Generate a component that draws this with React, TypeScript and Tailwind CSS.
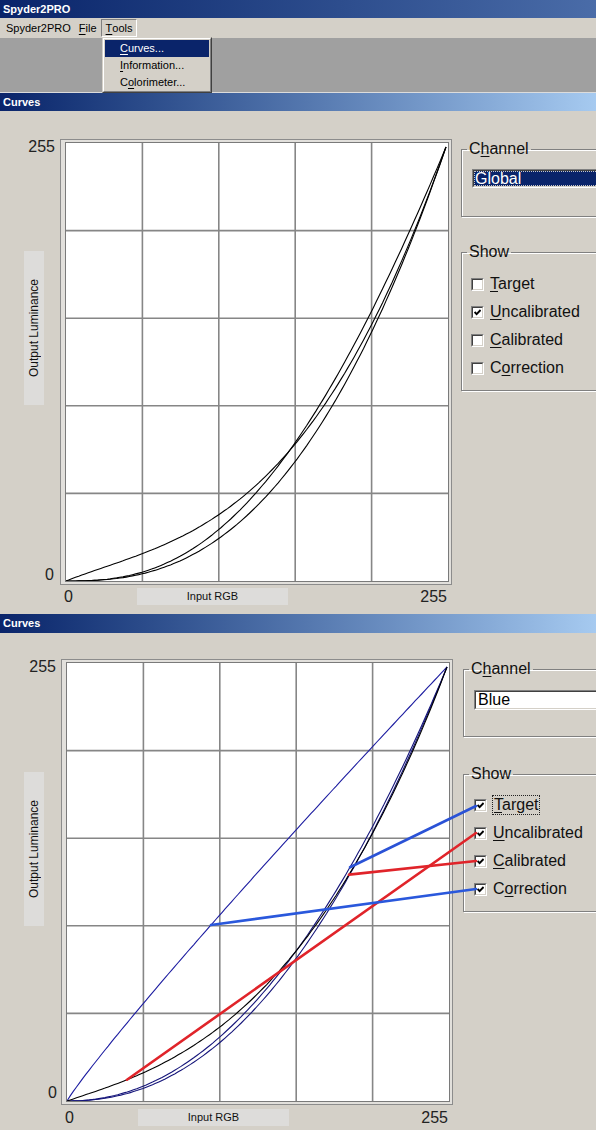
import React from "react";

// plot area inside the sunken frame
const W = 382;
const H = 438;

type Fn = (x: number) => number;

// sample a transfer curve into an svg path (y grows upward from the plot bottom)
const curvePath = (f: Fn, steps = 120) => {
  const pts: string[] = [];
  for (let i = 0; i <= steps; i++) {
    const x = i / steps;
    const y = Math.min(1, Math.max(0, f(x)));
    pts.push(`${(x * (W - 2)).toFixed(1)},${(H - y * (H - 4)).toFixed(1)}`);
  }
  return "M" + pts.join(" L");
};

// global channel
const gBump: Fn = (x) => x ** 2.5 + 0.35 * x * (1 - x) ** 2;
const gLow: Fn = (x) => x ** 2.55;
const gMid: Fn = (x) => x ** (2.5 - 0.4 * x);

// blue channel
const bTarget: Fn = (x) => x ** 0.93;
const bUncal: Fn = (x) => x ** 2.35 + 0.3 * x * (1 - x) ** 1.6;
const bCal: Fn = (x) => x ** 2.1;
const bCorr: Fn = (x) => x ** 2.2;

const Key = ({ text, at }: { text: string; at: number }) => (
  <>
    {text.slice(0, at)}
    <span className="underline underline-offset-2">{text[at]}</span>
    {text.slice(at + 1)}
  </>
);

const TitleBar = ({ children, className = "" }: { children: React.ReactNode; className?: string }) => (
  <div
    className={`bg-linear-to-r from-[#0a246a] to-[#a6caf0] text-white font-bold text-[11px] pl-[3px] flex items-center ${className}`}
  >
    {children}
  </div>
);

const Check = ({ on }: { on: boolean }) => (
  <div className="shrink-0 w-[13px] h-[13px] border border-t-[#808080] border-l-[#808080] border-b-white border-r-white">
    <div className="w-full h-full flex items-center justify-center bg-white border border-t-[#404040] border-l-[#404040] border-b-[#d4d0c8] border-r-[#d4d0c8]">
      {on && (
        <svg width="7" height="7" viewBox="0 0 7 7">
          <path d="M0.6 3 L2.6 5.2 L6.6 1" stroke="#000" strokeWidth="1.9" fill="none" />
        </svg>
      )}
    </div>
  </div>
);

const GridLines = () => (
  <g stroke="#868686" strokeWidth="1.6">
    {[1, 2, 3, 4].map((i) => (
      <line key={"v" + i} x1={(i * W) / 5} y1={0} x2={(i * W) / 5} y2={H} />
    ))}
    {[1, 2, 3, 4].map((i) => (
      <line key={"h" + i} x1={0} y1={(i * H) / 5} x2={W} y2={(i * H) / 5} />
    ))}
  </g>
);

const Plot = ({ children }: { children: React.ReactNode }) => (
  <div className="w-[392px] h-[446px] border border-[#8c8c8c] bg-[#e2e0dc] pl-[4px] pt-[2px] pr-[2px] pb-[2px]">
    <div className="border border-[#7a7a7a] bg-white">
      <svg width={W} height={H} className="block">
        <GridLines />
        {children}
      </svg>
    </div>
  </div>
);

type Item = { label: string; at: number; on: boolean; focus?: boolean };

type PanelProps = {
  variant: "global" | "blue";
  items: Item[];
  children: React.ReactNode;
  overlay?: React.ReactNode;
};

const CurvesPanel = ({ variant, items, children, overlay }: PanelProps) => {
  const g = variant === "global";
  return (
    <div className={`relative overflow-hidden flex ${g ? "h-[503px] pt-[28px]" : "h-[497px] pt-[26px]"}`}>
      {/* y axis labels */}
      <div className={`shrink-0 h-[446px] flex flex-col ${g ? "w-[60px]" : "w-[61px]"}`}>
        <div className="text-right pr-[5px] text-[16px] leading-[16px] text-[#222]">255</div>
        <div
          className={`ml-[24px] w-[20px] h-[154px] bg-[#dddcda] flex items-center justify-center ${g ? "mt-[96px]" : "mt-[97px]"}`}
        >
          <span className="[writing-mode:vertical-rl] rotate-180 text-[12px] text-[#111]">Output Luminance</span>
        </div>
        <div className="flex-1" />
        <div className={`text-right text-[16px] leading-[16px] text-[#222] ${g ? "pr-[6px] pb-[2px]" : "pr-[4px] pb-[4px]"}`}>0</div>
      </div>

      {/* plot + x axis labels */}
      <div className="shrink-0 w-[392px]">
        <Plot>{children}</Plot>
        <div className={`flex h-[17px] items-center ${g ? "mt-[3px]" : "mt-[4px]"}`}>
          <div className="w-[77px] pl-[4px] text-[16px] leading-[16px] text-[#222]">0</div>
          <div className="w-[151px] h-[17px] bg-[#dddcda] flex items-center justify-center text-[11px] text-[#111]">
            Input RGB
          </div>
          <div className="flex-1 text-right pr-[5px] text-[16px] leading-[16px] text-[#222]">255</div>
        </div>
      </div>

      {/* channel + show groups */}
      <div className={`shrink-0 w-[150px] mt-[1px] ${g ? "ml-[9px]" : "ml-[10px]"}`}>
        <fieldset
          className={`border border-[#808080] shadow-[inset_1px_1px_0_#fff,1px_1px_0_#fff] px-0 pt-0 ${g ? "pb-[28px]" : "pb-[26px]"}`}
        >
          <legend className="ml-[5px] px-[2px] text-[16px] leading-[18px] text-[#111]">
            <Key text="Channel" at={1} />
          </legend>
          <div
            className={`ml-[10px] w-[140px] border border-t-[#808080] border-l-[#808080] border-b-white border-r-white ${g ? "mt-[11px] h-[19px]" : "mt-[12px] h-[20px]"}`}
          >
            <div className="h-full bg-white border border-t-[#404040] border-l-[#404040] border-b-[#d4d0c8] border-r-[#d4d0c8]">
              {g ? (
                <div className="h-full bg-[#0a246a] text-white text-[16px] leading-[15px] outline-1 outline-dotted outline-[#c8c8c8] -outline-offset-1 pl-[1px]">
                  Global
                </div>
              ) : (
                <div className="h-full text-[16px] leading-[16px] pl-[2px] text-black">Blue</div>
              )}
            </div>
          </div>
        </fieldset>

        <fieldset
          className={`border border-[#808080] shadow-[inset_1px_1px_0_#fff,1px_1px_0_#fff] px-0 pt-0 pb-[8px] ${g ? "mt-[26px]" : "mt-[28px]"}`}
        >
          <legend className="ml-[5px] px-[2px] text-[16px] leading-[18px] text-[#111]">Show</legend>
          <div className={g ? "mt-[9px]" : "mt-[8px]"}>
            {items.map((it) => (
              <div key={it.label} className={`h-[28px] flex items-center ${g ? "pl-[9px]" : "pl-[10px]"}`}>
                <Check on={it.on} />
                <span
                  className={`text-[16px] leading-[18px] text-[#111] ${it.focus ? "ml-[5px] px-[1px] border border-dotted border-[#222]" : "ml-[6px]"}`}
                >
                  <Key text={it.label} at={it.at} />
                </span>
              </div>
            ))}
          </div>
        </fieldset>
      </div>

      {overlay}
    </div>
  );
};

// blue panel: plot origin in panel coordinates
const OX = 67;
const OY = 468;
const at = (f: Fn, px: number): [number, number] => {
  const nx = (px - OX) / (W - 2);
  return [px, OY - f(nx) * (H - 4)];
};

const callouts: { from: [number, number]; to: [number, number]; color: string }[] = [
  { from: [476, 173], to: at(bCal, 350), color: "#2a52d6" },
  { from: [476, 200], to: at(bUncal, 127), color: "#e0242a" },
  { from: [476, 228], to: at(bUncal, 349), color: "#e0242a" },
  { from: [476, 256], to: at(bTarget, 211), color: "#2a58dc" },
];

const Callouts = () => (
  <svg className="absolute left-0 top-0 pointer-events-none" width={596} height={497}>
    {callouts.map((c, i) => (
      <line
        key={i}
        x1={c.from[0]}
        y1={c.from[1]}
        x2={c.to[0]}
        y2={c.to[1]}
        stroke={c.color}
        strokeWidth="2.6"
        strokeLinecap="round"
      />
    ))}
  </svg>
);

export default function App() {
  return (
    <div className="w-[596px] h-[1130px] overflow-hidden bg-[#d4d0c8] font-['Liberation_Sans',Arial,sans-serif] select-none">
      {/* app window title */}
      <div className="h-[18px] bg-linear-to-r from-[#0a246a] to-[#4a6ca8] text-white font-bold text-[11px] pl-[3px] flex items-center">
        Spyder2PRO
      </div>

      {/* menu bar */}
      <div className="relative z-10 h-[20px] flex items-center text-[11px] text-black">
        <span className="ml-[6px]">Spyder2PRO</span>
        <span className="ml-[8px]">
          <Key text="File" at={0} />
        </span>
        <span className="ml-[4px] h-[18px] px-[4px] flex items-center border border-t-[#808080] border-l-[#808080] border-b-white border-r-white">
          <Key text="Tools" at={0} />
        </span>

        <div className="absolute left-[102px] top-[19px] w-[110px] h-[56px] border border-t-[#d4d0c8] border-l-[#d4d0c8] border-b-[#404040] border-r-[#404040] bg-[#d4d0c8]">
          <div className="h-full border border-t-white border-l-white border-b-[#808080] border-r-[#808080] p-[1px]">
            <div className="h-[17px] bg-[#0a246a] text-white pl-[15px] flex items-center">
              <Key text="Curves..." at={0} />
            </div>
            <div className="h-[17px] pl-[15px] flex items-center">
              <Key text="Information..." at={0} />
            </div>
            <div className="h-[17px] pl-[15px] flex items-center">
              <Key text="Colorimeter..." at={1} />
            </div>
          </div>
        </div>
      </div>

      {/* MDI workspace */}
      <div className="h-[55px] bg-[#a0a0a0] border-b border-[#dcdcdc]" />

      <TitleBar className="h-[18px]">Curves</TitleBar>
      <CurvesPanel
        variant="global"
        items={[
          { label: "Target", at: 0, on: false },
          { label: "Uncalibrated", at: 0, on: true },
          { label: "Calibrated", at: 0, on: false },
          { label: "Correction", at: 1, on: false },
        ]}
      >
        <g fill="none" stroke="#000" strokeWidth="1.1">
          <path d={curvePath(gBump)} />
          <path d={curvePath(gLow)} />
          <path d={curvePath(gMid)} />
        </g>
      </CurvesPanel>

      <TitleBar className="h-[19px]">Curves</TitleBar>
      <CurvesPanel
        variant="blue"
        items={[
          { label: "Target", at: 0, on: true, focus: true },
          { label: "Uncalibrated", at: 0, on: true },
          { label: "Calibrated", at: 0, on: true },
          { label: "Correction", at: 1, on: true },
        ]}
        overlay={<Callouts />}
      >
        <g fill="none" strokeWidth="1.1">
          <path d={curvePath(bTarget)} stroke="#1c1ca0" />
          <path d={curvePath(bCal)} stroke="#15157a" />
          <path d={curvePath(bCorr)} stroke="#15157a" />
          <path d={curvePath(bUncal)} stroke="#000" />
        </g>
      </CurvesPanel>
    </div>
  );
}
